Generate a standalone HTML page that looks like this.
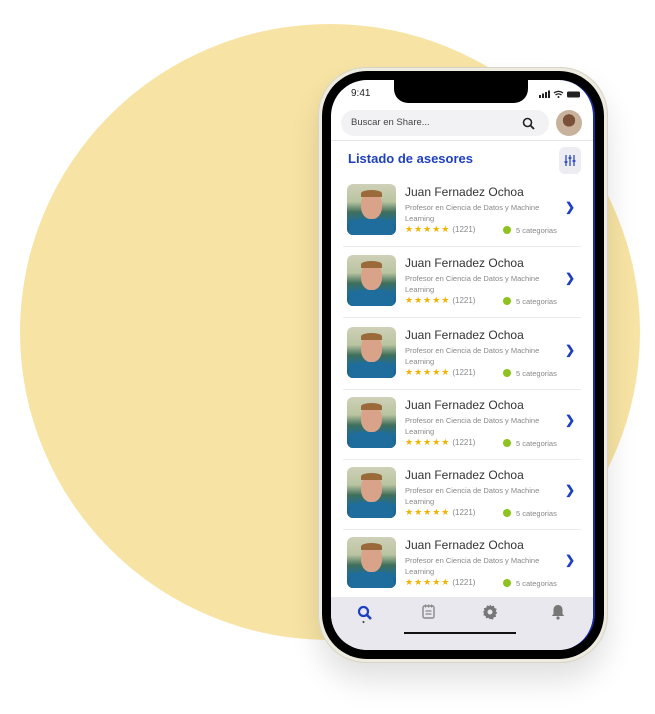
<!DOCTYPE html>
<html><head><meta charset="utf-8"><style>
*{margin:0;padding:0;box-sizing:border-box}
body{width:655px;height:714px;background:#fff;position:relative;overflow:hidden;font-family:"Liberation Sans",Arial,sans-serif}
.circle{position:absolute;left:20px;top:24px;width:620px;height:616px;border-radius:50%;background:#F7E4A4}
.frame{position:absolute;left:318px;top:67px;width:290px;height:596px;border-radius:48px;background:#EDEADF;box-shadow:inset 0 0 0 1px #d8d4c6,0 18px 30px rgba(0,0,0,.12)}
.bezel{position:absolute;left:322px;top:71px;width:282px;height:588px;border-radius:45px;background:#000}
.screen{position:absolute;left:331px;top:80px;width:264px;height:570px;border-radius:36px;background:#fff;overflow:hidden;border-right:2px solid #1b2a9a}
.notch{position:absolute;left:63px;top:0;width:134px;height:23px;background:#000;border-radius:0 0 14px 14px}
.time{position:absolute;left:20px;top:8px;font-size:10px;color:#222}
.search{position:absolute;left:10px;top:30px;width:208px;height:26px;border-radius:13px;background:#F2F2F5;font-size:9.5px;color:#444;padding:7px 0 0 10px}
.avatar{position:absolute;left:225px;top:30px;width:26px;height:26px;border-radius:50%;background:radial-gradient(circle at 50% 40%,#7a5038 0 30%,#c9b29c 31%)}
.hr{position:absolute;left:0;top:60px;width:264px;height:1px;background:#e6e6ea}
.title{position:absolute;left:17px;top:71px;font-size:13px;font-weight:bold;color:#1E3FC0}
.filter{position:absolute;left:228px;top:67px;width:22px;height:27px;border-radius:6px;background:#ECECF2}
.row{position:absolute;left:12px;width:238px;height:70px}
.row .ph{position:absolute;left:4px;top:0;width:49px;height:51px;border-radius:6px;background:linear-gradient(180deg,#cfd0b8 0,#b9c4a0 35%,#3f6f5a 55%,#1f6d9a 75%,#1c5a86 100%);overflow:hidden}
.ph .face{position:absolute;left:14px;top:8px;width:21px;height:27px;border-radius:45%;background:#d9a38a}
.ph .hair{position:absolute;left:14px;top:6px;width:21px;height:7px;border-radius:50% 50% 0 0;background:#9a6a3a}
.ph .body{position:absolute;left:2px;top:35px;width:45px;height:20px;border-radius:12px 12px 0 0;background:#1e6d9c}
.row .nm{position:absolute;left:62px;top:1px;font-size:12px;color:#333}
.row .ds{position:absolute;left:62px;top:18px;width:150px;font-size:7.5px;line-height:11px;color:#888}
.row .st{position:absolute;left:62px;top:40px;font-size:9px;color:#F0B400;letter-spacing:1px}
.row .st span{color:#888;letter-spacing:0;margin-left:2px;font-size:8px}
.row .cat{position:absolute;left:160px;top:42px;font-size:7.5px;color:#888}
.row .cat i{display:inline-block;width:8px;height:8px;border-radius:50%;background:#8DC21F;vertical-align:-1px;margin-right:5px}
.row .ch{position:absolute;left:222px;top:16px;color:#1E3FC0;font-size:12px;font-weight:bold}
.row .ln{position:absolute;left:0;top:62px;width:238px;height:1px;background:#ececef}
.nav{position:absolute;left:0;top:517px;width:264px;height:53px;background:#E9E8EE}
.home{position:absolute;left:73px;top:552px;width:112px;height:2px;background:#111}
</style></head><body>
<div class="circle"></div>
<div class="frame"></div>
<div class="bezel"></div>
<div class="screen">
<div class="notch"></div>
<div class="time">9:41</div>
<svg style="position:absolute;left:208px;top:10px" width="46" height="9"><rect x="0" y="5" width="2" height="3" fill="#222"/><rect x="3" y="3.5" width="2" height="4.5" fill="#222"/><rect x="6" y="2" width="2" height="6" fill="#222"/><rect x="9" y="0.5" width="2" height="7.5" fill="#222"/><path d="M15 3a7 7 0 0 1 9 0M16.5 5a4.5 4.5 0 0 1 6 0" stroke="#222" stroke-width="1.3" fill="none"/><circle cx="19.5" cy="7" r="1" fill="#222"/><rect x="28" y="1.5" width="13" height="6" rx="1.5" fill="#222"/></svg>
<div class="search">Buscar en Share...</div>
<svg style="position:absolute;left:191px;top:37px" width="13" height="13"><circle cx="5.5" cy="5.5" r="4" stroke="#222" stroke-width="1.6" fill="none"/><path d="M8.5 8.5l3.5 3.5" stroke="#222" stroke-width="1.8"/></svg>
<div class="avatar"></div>
<div class="hr"></div>
<div class="title">Listado de asesores</div>
<div class="filter"><svg width="22" height="27"><path d="M7 8v11M11 8v11M15 8v11" stroke="#1E3FC0" stroke-width="1.2"/><path d="M5.5 15h3M9.5 11h3M13.5 14h3" stroke="#1E3FC0" stroke-width="1.5"/></svg></div>
<div id="rows"></div>
<div class="nav">
<svg style="position:absolute;left:26px;top:8px" width="16" height="18"><circle cx="6.5" cy="6.5" r="4.5" stroke="#1E3FC0" stroke-width="2.2" fill="none"/><path d="M10 10l4 4" stroke="#1E3FC0" stroke-width="2.6"/><circle cx="6.5" cy="17" r="1" fill="#333"/></svg>
<svg style="position:absolute;left:91px;top:7px" width="14" height="15"><rect x="1" y="2" width="11" height="12" rx="1.5" stroke="#888" stroke-width="1.4" fill="none"/><path d="M3.5 0.5v3M6.5 0.5v3M9.5 0.5v3M3.5 7h6M3.5 10h6" stroke="#888" stroke-width="1.2"/></svg>
<svg style="position:absolute;left:151px;top:7px" width="16" height="16" viewBox="0 0 16 16"><path d="M8 0.5l1.6 1.8 2.3-.7.5 2.4 2.3.9-.9 2.3 1.5 1.8-1.8 1.5.7 2.3-2.4.5-.9 2.3-2.3-.9L8 15.5l-1.6-1.8-2.3.7-.5-2.4-2.3-.9.9-2.3L.7 8l1.8-1.5-.7-2.3 2.4-.5.9-2.3 2.3.9z" fill="#777"/><circle cx="8" cy="8" r="2.5" fill="#E9E8EE"/></svg>
<svg style="position:absolute;left:220px;top:7px" width="14" height="16"><path d="M7 1c3 0 4.5 2.3 4.5 5v4l1.8 2H.7l1.8-2V6C2.5 3.3 4 1 7 1z" fill="#777"/><circle cx="7" cy="14" r="1.6" fill="#777"/></svg>
</div>
<div class="home"></div>
</div>
<script>
var t=[104,175,247,317,387,457],h='';
t.forEach(function(y){h+='<div class="row" style="top:'+y+'px"><div class="ph"><div class="face"></div><div class="hair"></div><div class="body"></div></div><div class="nm">Juan Fernadez Ochoa</div><div class="ds">Profesor en Ciencia de Datos y Machine Learning</div><div class="st">★★★★★<span>(1221)</span></div><div class="cat"><i></i>5 categorias</div><div class="ch">&#x276F;</div>'+(y<450?'<div class="ln"></div>':'')+'</div>'});
document.getElementById('rows').innerHTML=h;
</script>
</body></html>
